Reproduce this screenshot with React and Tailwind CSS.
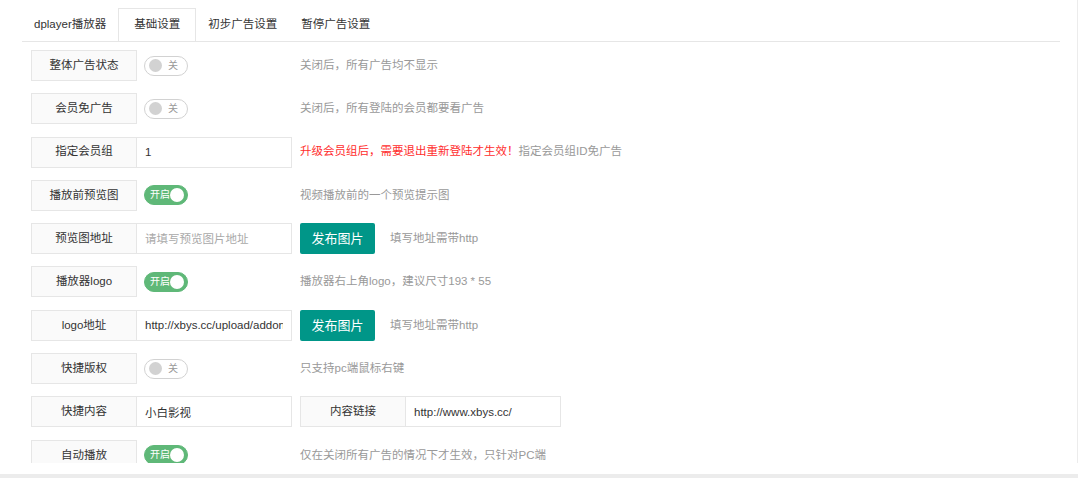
import React from "react";

const font = { fontFamily: '"Liberation Sans", "Noto Sans CJK SC", sans-serif' };

function Label({ children }) {
  return (
    <div className="w-[106px] h-full shrink-0 flex items-center justify-center bg-[#fafafa] border border-[#e6e6e6] text-[11.5px] text-[#333]">
      {children}
    </div>
  );
}

function Field({ value, placeholder, w = "w-[155px]" }) {
  return (
    <input
      readOnly
      value={value || ""}
      placeholder={placeholder}
      className={`${w} h-full shrink-0 border border-l-0 border-[#e6e6e6] bg-white px-[8px] text-[11.5px] text-[#333] placeholder:text-[#a9a9a9] outline-none`}
      style={font}
    />
  );
}

function Switch({ on }) {
  return (
    <div className="w-[155px] shrink-0 pl-[7px] flex items-center">
      {on ? (
        <div className="w-[44px] h-[20px] rounded-full bg-[#5fb878] border border-[#5fb878] flex items-center justify-between pl-[5px] pr-[3px]">
          <span className="text-[10px] text-white leading-none">开启</span>
          <span className="w-[14px] h-[14px] rounded-full bg-white" />
        </div>
      ) : (
        <div className="w-[44px] h-[20px] rounded-full bg-white border border-[#d2d2d2] flex items-center justify-between pl-[4px] pr-[9px]">
          <span className="w-[13px] h-[13px] rounded-full bg-[#d2d2d2]" />
          <span className="text-[10px] text-[#999] leading-none">关</span>
        </div>
      )}
    </div>
  );
}

function Tip({ children }) {
  return <div className="ml-[8px] text-[11.5px] text-[#999] whitespace-nowrap">{children}</div>;
}

function UploadBtn() {
  return (
    <>
      <button className="ml-[8px] w-[75px] h-full bg-[#009688] text-white text-[13px] rounded-[2px]">发布图片</button>
      <div className="ml-[15px] text-[11.5px] text-[#999] whitespace-nowrap">填写地址需带http</div>
    </>
  );
}

function Row({ children }) {
  return <div className="flex items-center h-[31px]">{children}</div>;
}

export default function App() {
  const tabs = ["dplayer播放器", "基础设置", "初步广告设置", "暂停广告设置"];
  return (
    <div className="w-[1078px] h-[478px] bg-white flex flex-col" style={font}>
      <div className="h-[463px] overflow-hidden border-r border-[#ececec]">
        <div className="ml-[22px] w-[1038px] pt-[8px] flex border-b border-[#e6e6e6]">
          {tabs.map((t, i) => (
            <div
              key={t}
              className={
                i === 1
                  ? "h-[33px] px-[15px] flex items-center text-[11.5px] text-[#333] bg-white border border-b-0 border-[#e6e6e6] -mb-px"
                  : "h-[33px] px-[12px] flex items-center text-[11.5px] text-[#333]"
              }
            >
              {t}
            </div>
          ))}
        </div>

        <div className="ml-[31px] mt-[8px] flex flex-col gap-[12.3px]">
          <Row>
            <Label>整体广告状态</Label>
            <Switch on={false} />
            <Tip>关闭后，所有广告均不显示</Tip>
          </Row>
          <Row>
            <Label>会员免广告</Label>
            <Switch on={false} />
            <Tip>关闭后，所有登陆的会员都要看广告</Tip>
          </Row>
          <Row>
            <Label>指定会员组</Label>
            <Field value="1" />
            <div className="ml-[8px] text-[11.5px] whitespace-nowrap">
              <span className="text-[#ff2d2d]">升级会员组后，需要退出重新登陆才生效！</span>
              <span className="text-[#999]">指定会员组ID免广告</span>
            </div>
          </Row>
          <Row>
            <Label>播放前预览图</Label>
            <Switch on />
            <Tip>视频播放前的一个预览提示图</Tip>
          </Row>
          <Row>
            <Label>预览图地址</Label>
            <Field placeholder="请填写预览图片地址" />
            <UploadBtn />
          </Row>
          <Row>
            <Label>播放器logo</Label>
            <Switch on />
            <Tip>播放器右上角logo，建议尺寸193 * 55</Tip>
          </Row>
          <Row>
            <Label>logo地址</Label>
            <Field value="http://xbys.cc/upload/addon/2021/logo.png" />
            <UploadBtn />
          </Row>
          <Row>
            <Label>快捷版权</Label>
            <Switch on={false} />
            <Tip>只支持pc端鼠标右键</Tip>
          </Row>
          <Row>
            <Label>快捷内容</Label>
            <Field value="小白影视" />
            <div className="ml-[8px] h-full flex">
              <Label>内容链接</Label>
              <Field value="http://www.xbys.cc/" />
            </div>
          </Row>
          <Row>
            <Label>自动播放</Label>
            <Switch on />
            <Tip>仅在关闭所有广告的情况下才生效，只针对PC端</Tip>
          </Row>
        </div>
      </div>
      <div className="h-[11px] bg-white" />
      <div className="h-[4px] bg-[#ececec]" />
    </div>
  );
}
